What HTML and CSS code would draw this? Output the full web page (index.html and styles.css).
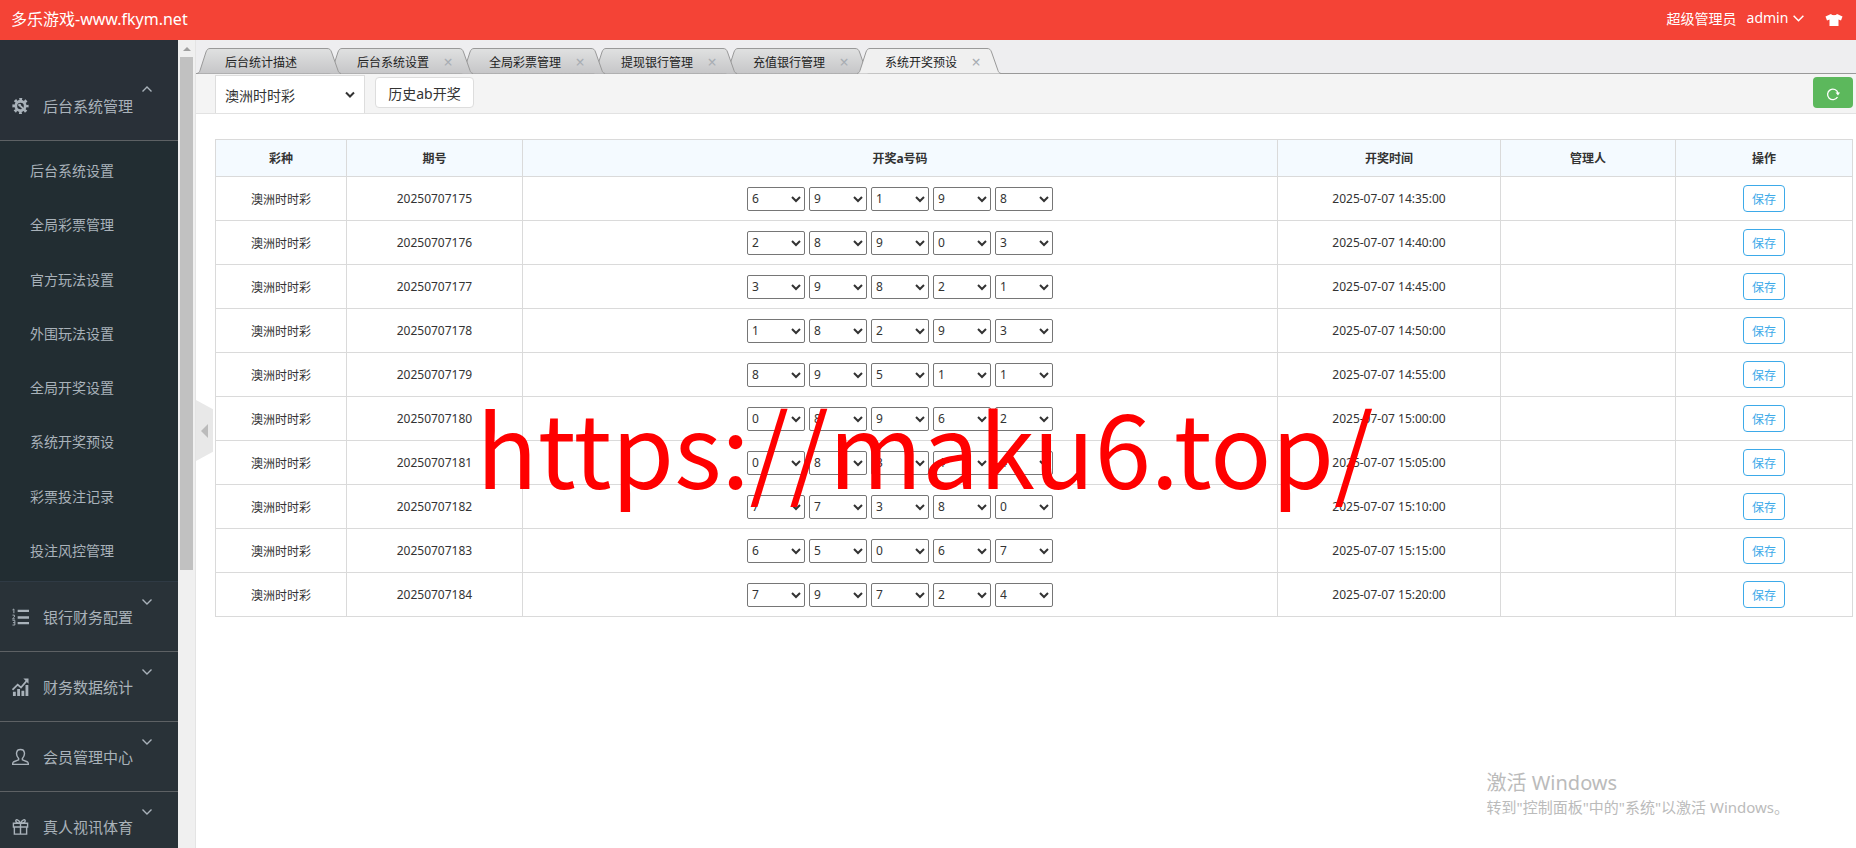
FILE: index.html
```html
<!DOCTYPE html>
<html lang="zh-CN">
<head>
  <meta charset="UTF-8" />
  <meta name="viewport" content="width=device-width, initial-scale=1.0"/>
  <title>多乐游戏-www.fkym.net</title>
  <link rel="stylesheet" href="styles.css">
</head>
<body>
  <svg class="defs" aria-hidden="true">
    <defs>
      <linearGradient id="tabFill" x1="0" y1="0" x2="0" y2="1">
        <stop offset="0" stop-color="#e0e1e1"/>
        <stop offset="1" stop-color="#c6c6c8"/>
      </linearGradient>
      <symbol id="tabShape" viewBox="0 0 144 26">
        <path d="M0 25.5C2 25 2.500 24 3 22.500L9 4C10 1.500 11 .5 13 .5H130C132.500 .5 133.500 1.500 134.500 4L141 22.500C141.500 24 142 25 144 25.500"/>
      </symbol>
      <symbol id="chevron" viewBox="0 0 12 8">
        <path d="M1.500 1.500L6 6L10.500 1.500" fill="none" stroke="currentColor" stroke-width="1.400"/>
      </symbol>
    </defs>
  </svg>

  <header class="header">
    <h1 class="logo">多乐游戏-www.fkym.net</h1>
    <div class="user">
      <span>超级管理员</span>
      <a href="#" class="user-name">admin <svg class="chevron"><use href="#chevron"/></svg></a>
      <button class="skin" aria-label="换肤">
        <svg width="18" height="14" viewBox="0 0 18 14"><path d="M6 1C7 2.600 11 2.600 12 1L17.500 3.500L16 7.500L13.500 6.500V13H4.500V6.500L2 7.500L.5 3.500Z" fill="#fff"/></svg>
      </button>
    </div>
  </header>

  <div class="container">
    <aside class="sidebar">
      <nav class="menu">
        <a href="#" class="menu-item open">
          <svg class="menu-icon" viewBox="0 0 18 18"><circle cx="9" cy="9" r="5" fill="none" stroke="currentColor" stroke-width="3"/><circle cx="9" cy="9" r="7.200" fill="none" stroke="currentColor" stroke-width="2.800" stroke-dasharray="2.900 2.755" stroke-dashoffset="1.450"/><circle cx="8" cy="8" r="1.500" fill="currentColor"/><path d="M8 8L14 14" stroke="currentColor" stroke-width="2"/></svg>
          <span>后台系统管理</span>
          <svg class="chevron"><use href="#chevron"/></svg>
        </a>
        <ul class="submenu">
          <li><a href="#">后台系统设置</a></li>
          <li><a href="#">全局彩票管理</a></li>
          <li><a href="#">官方玩法设置</a></li>
          <li><a href="#">外围玩法设置</a></li>
          <li><a href="#">全局开奖设置</a></li>
          <li><a href="#">系统开奖预设</a></li>
          <li><a href="#">彩票投注记录</a></li>
          <li><a href="#">投注风控管理</a></li>
        </ul>
        <a href="#" class="menu-item">
          <svg class="menu-icon" viewBox="0 0 18 18" fill="none" stroke="currentColor"><path d="M6 2.500H18M6 9.500H18M6 15.500H18" stroke-width="2.600"/><path d="M.5 1.500L2 .5V5M.5 7H2.500V9L.5 11H3M.5 12.500H3V17.500H.5M1 15H3"/></svg>
          <span>银行财务配置</span>
          <svg class="chevron"><use href="#chevron"/></svg>
        </a>
        <a href="#" class="menu-item">
          <svg class="menu-icon" viewBox="0 0 18 18"><path d="M1 14H4V18.500H1ZM5.500 11H8.500V18.500H5.500ZM10 13H13V18.500H10ZM14.300 7H17.300V18.500H14.300ZM12 0H17.500V5.500Z" fill="currentColor"/><path d="M.5 12L6 6.500L9.500 9.500L15.500 2.500" fill="none" stroke="currentColor" stroke-width="1.800"/></svg>
          <span>财务数据统计</span>
          <svg class="chevron"><use href="#chevron"/></svg>
        </a>
        <a href="#" class="menu-item">
          <svg class="menu-icon" viewBox="0 0 18 18"><path d="M7 10.500C5 8.500 4.500 6 5 4C5.500 0 12.500 0 13 4C13.500 6 13 8.500 11 10.500V12L16 14C17 14.500 17.300 15.500 17.300 16.800H.7C.7 15.500 1 14.500 2 14L7 12Z" fill="none" stroke="currentColor" stroke-width="1.500"/></svg>
          <span>会员管理中心</span>
          <svg class="chevron"><use href="#chevron"/></svg>
        </a>
        <a href="#" class="menu-item">
          <svg class="menu-icon" viewBox="0 0 18 18"><path d="M1.500 5H16.500V9H1.500ZM2.500 9V16.500H15.500V9M9 5V16.500M9 5C7 1 4 .5 4 2.500C4 4 6 5 9 5C12 5 14 4 14 2.500C14 .5 11 1 9 5" fill="none" stroke="currentColor" stroke-width="1.500"/></svg>
          <span>真人视讯体育</span>
          <svg class="chevron"><use href="#chevron"/></svg>
        </a>
      </nav>
      <div class="scrollbar">
        <span class="scroll-up"></span>
        <span class="scroll-thumb"></span>
      </div>
    </aside>

    <main class="main-content">
      <button class="collapse" aria-label="收起菜单"><span></span></button>

      <ul class="tabs">
        <li><svg><use href="#tabShape"/></svg><a href="#">后台统计描述</a></li>
        <li><svg><use href="#tabShape"/></svg><a href="#">后台系统设置</a><button aria-label="关闭">×</button></li>
        <li><svg><use href="#tabShape"/></svg><a href="#">全局彩票管理</a><button aria-label="关闭">×</button></li>
        <li><svg><use href="#tabShape"/></svg><a href="#">提现银行管理</a><button aria-label="关闭">×</button></li>
        <li><svg><use href="#tabShape"/></svg><a href="#">充值银行管理</a><button aria-label="关闭">×</button></li>
        <li class="active"><svg><use href="#tabShape"/></svg><a href="#">系统开奖预设</a><button aria-label="关闭">×</button></li>
      </ul>

      <div class="toolbar">
        <div class="lottery">
          <select aria-label="彩种">
            <option>澳洲时时彩</option>
          </select>
          <svg width="10" height="8" viewBox="0 0 10 8"><path d="M1 1.500L5 5.500L9 1.500" fill="none" stroke="#333" stroke-width="2"/></svg>
        </div>
        <button class="history">历史ab开奖</button>
        <button class="refresh" aria-label="刷新">
          <svg width="14" height="14" viewBox="0 0 14 14"><path d="M11.500 10A5.300 5.300 0 1 1 12 6" fill="none" stroke="#fff" stroke-width="1.300"/><path d="M9.500 5.500H14L12 8.500Z" fill="#fff"/></svg>
        </button>
      </div>

      <table class="draws">
        <colgroup>
          <col class="col-name"><col class="col-issue"><col><col class="col-time"><col class="col-admin"><col class="col-action">
        </colgroup>
        <thead>
          <tr><th>彩种</th><th>期号</th><th>开奖a号码</th><th>开奖时间</th><th>管理人</th><th>操作</th></tr>
        </thead>
        <tbody id="drawList"></tbody>
      </table>
    </main>
  </div>

  <div class="watermark">https://maku6.top/</div>
  <div class="activate">
    <p class="activate-title">激活 Windows</p>
    <p>转到"控制面板"中的"系统"以激活 Windows。</p>
  </div>

  <script>
    const draws = [
      ['20250707175', '69198', '14:35:00'],
      ['20250707176', '28903', '14:40:00'],
      ['20250707177', '39821', '14:45:00'],
      ['20250707178', '18293', '14:50:00'],
      ['20250707179', '89511', '14:55:00'],
      ['20250707180', '08962', '15:00:00'],
      ['20250707181', '08344', '15:05:00'],
      ['20250707182', '77380', '15:10:00'],
      ['20250707183', '65067', '15:15:00'],
      ['20250707184', '79724', '15:20:00']
    ];

    function ballSelect(value, index) {
      let options = '';
      for (let i = 0; i < 10; i++) {
        options += `<option${i === Number(value) ? ' selected' : ''}>${i}</option>`;
      }
      return `<select aria-label="第${index + 1}球">${options}</select>`;
    }

    document.getElementById('drawList').innerHTML = draws.map(([issue, code, time]) => `
      <tr>
        <td>澳洲时时彩</td>
        <td>${issue}</td>
        <td><div class="balls">${code.split('').map(ballSelect).join('')}</div></td>
        <td>2025-07-07 ${time}</td>
        <td></td>
        <td><button class="save">保存</button></td>
      </tr>`).join('');
  </script>
</body>
</html>
```
FILE: styles.css
```css
* {
  box-sizing: border-box;
}

body {
  margin: 0;
  height: 100vh;
  overflow: hidden;
  display: flex;
  flex-direction: column;
  font-family: "Noto Sans", "Noto Sans CJK SC", sans-serif;
  font-size: 12px;
  color: #333;
  background: #fff;
}

a {
  color: inherit;
  text-decoration: none;
}

ul {
  list-style: none;
  margin: 0;
  padding: 0;
}

button,
select {
  font-family: inherit;
  color: inherit;
}

button {
  cursor: pointer;
}

.defs {
  position: absolute;
  width: 0;
  height: 0;
}

.chevron {
  width: 12px;
  height: 8px;
}

/* header */
.header {
  flex: none;
  height: 40px;
  padding: 0 13px 5px 11px;
  display: flex;
  justify-content: space-between;
  align-items: center;
  background: #f44336;
  color: #fff;
}

.logo {
  margin: 0;
  font-size: 16px;
  font-weight: 400;
}

.user {
  display: flex;
  align-items: center;
  gap: 10px;
  font-size: 14px;
}

.user .chevron {
  width: 13px;
  height: 9px;
}

.skin {
  display: flex;
  margin-left: 10px;
  padding: 4px 0 0;
  border: 0;
  background: none;
}

/* sidebar */
.container {
  flex: 1;
  min-height: 0;
  display: flex;
}

.sidebar {
  flex: none;
  width: 196px;
  display: flex;
  overflow: hidden;
  border-right: 1px solid #e4e4e4;
}

.menu {
  width: 178px;
  padding-top: 31px;
  background: #293038;
  color: #a9b2ba;
}

.menu-item {
  position: relative;
  display: flex;
  align-items: center;
  gap: 14px;
  height: 70px;
  padding-left: 12px;
  border-bottom: 1px solid #5d6164;
  background: #293238;
  font-size: 15px;
}

.menu-item.open {
  background: none;
}

.menu-icon {
  width: 17px;
  height: 18px;
}

.menu-item .chevron {
  position: absolute;
  top: 16px;
  left: 141px;
}

.menu-item.open .chevron {
  top: 14px;
  transform: rotate(180deg);
}

.submenu {
  display: flex;
  flex-direction: column;
  height: 441px;
  padding: 2px 0 4px;
  background: #222d32;
  border-bottom: 1px solid #2f3a44;
  font-size: 14px;
}

.submenu li {
  flex: 1;
  display: flex;
  align-items: center;
  padding-left: 30px;
}

.scrollbar {
  flex: 1;
  display: flex;
  flex-direction: column;
  padding: 7px 2px 0;
  background: #f0f0f0;
}

.scroll-up {
  align-self: center;
  margin-bottom: 6px;
  border: 4px solid transparent;
  border-top: 0;
  border-bottom-color: #a0a0a0;
}

.scroll-thumb {
  height: 64%;
  background: #c1c1c1;
}

/* main */
.main-content {
  position: relative;
  flex: 1;
  min-width: 0;
}

.collapse {
  position: absolute;
  top: calc(50% - 44px);
  left: 0;
  width: 17px;
  height: 61px;
  padding: 0;
  border: 0;
  background: #e8e8e8;
  clip-path: polygon(0 0, 100% 15%, 100% 85%, 0 100%);
}

.collapse span {
  display: block;
  width: 0;
  margin-left: 5px;
  border: 7px solid transparent;
  border-left: 0;
  border-right-color: #bbb;
}

.tabs {
  display: flex;
  height: 34px;
  padding: 8px 0 0 1px;
  background: linear-gradient(#999, #999) bottom / 100% 1px no-repeat #eeeef0;
}

.tabs li {
  position: relative;
  z-index: 1;
  flex: none;
  display: flex;
  align-items: center;
  width: 144px;
  height: 26px;
  margin-right: -12px;
  padding: 2px 0 0 28px;
  color: #222;
}

.tabs li:nth-child(1) { z-index: 5; }
.tabs li:nth-child(2) { z-index: 4; }
.tabs li:nth-child(3) { z-index: 3; }
.tabs li:nth-child(4) { z-index: 2; }
.tabs li.active { z-index: 6; }

.tabs svg {
  position: absolute;
  inset: 0;
  z-index: -1;
  width: 144px;
  height: 26px;
  fill: url(#tabFill);
  stroke: #999;
}

.tabs .active svg {
  fill: #f0f0f0;
}

.tabs button {
  width: 12px;
  margin-left: 13px;
  padding: 0;
  border: 0;
  background: none;
  color: #a8adb3;
  font-size: 16px;
  line-height: 16px;
}

.toolbar {
  display: flex;
  align-items: flex-start;
  height: 40px;
  padding: 1px 3px 0 19px;
  background: #f4f4f4;
  border-bottom: 1px solid #e2e2e2;
}

.lottery {
  position: relative;
}

.lottery select {
  display: block;
  appearance: none;
  width: 150px;
  height: 38px;
  padding: 2px 24px 0 9px;
  border: 1px solid #ddd;
  border-bottom: 0;
  border-radius: 0;
  background: #fff;
  font-size: 14px;
}

.lottery svg {
  position: absolute;
  top: 16px;
  right: 10px;
  pointer-events: none;
}

.history,
.refresh {
  height: 31px;
  margin-top: 2px;
  border-radius: 4px;
}

.history {
  width: 99px;
  margin-left: 10px;
  padding: 0;
  border: 1px solid #ddd;
  background: #fff;
  font-size: 14px;
}

.refresh {
  display: flex;
  align-items: center;
  justify-content: center;
  width: 40px;
  margin-left: auto;
  padding: 3px 0 0;
  border: 0;
  background: #5cb85c;
}

.draws {
  width: calc(100% - 22px);
  margin: 25px 3px 0 19px;
  border-collapse: collapse;
  table-layout: fixed;
  text-align: center;
}

.col-name { width: 8%; }
.col-issue { width: 176px; }
.col-time { width: 223px; }
.col-admin { width: 175px; }
.col-action { width: 177px; }

.draws th,
.draws td {
  padding: 0;
  border: 1px solid #dadada;
}

.draws th {
  height: 37px;
  background: #f4faff;
  font-weight: 700;
}

.draws td {
  height: 44px;
}

.balls {
  display: flex;
  justify-content: center;
  gap: 4px;
}

.balls select {
  width: 58px;
  height: 24px;
  padding: 0;
  border: 1px solid #767676;
  border-radius: 2px;
  background-color: #fff;
  font-size: 12px;
}

.save {
  width: 42px;
  height: 27px;
  padding: 0;
  border: 1px solid #3daae9;
  border-radius: 4px;
  background: #fff;
  color: #3daae9;
  font-size: 12px;
}

/* overlays */
.watermark {
  position: absolute;
  top: calc(50% + 21px);
  left: 50%;
  z-index: 10;
  padding-right: 6px;
  transform: translate(-50%, -50%);
  font-family: "Noto Sans CJK SC", sans-serif;
  font-size: 101px;
  line-height: 1;
  color: #f00;
  white-space: nowrap;
  pointer-events: none;
}

.activate {
  position: absolute;
  right: 67px;
  bottom: 29px;
  z-index: 9;
  color: #bbb;
  font-size: 15px;
  line-height: 24px;
  pointer-events: none;
}

.activate p {
  margin: 0;
}

.activate .activate-title {
  font-size: 20px;
}
```
